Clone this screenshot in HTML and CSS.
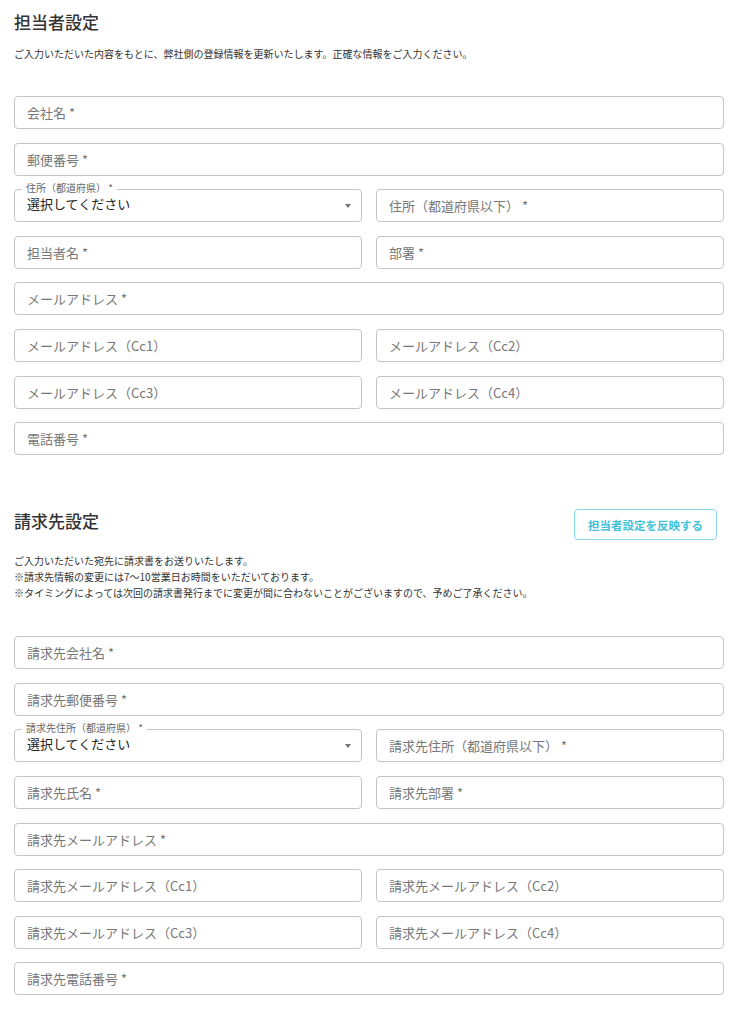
FILE: index.html
```html
<!DOCTYPE html>
<html lang="ja">
<head>
  <meta charset="UTF-8" />
  <meta name="viewport" content="width=device-width, initial-scale=1.0" />
  <title>担当者設定</title>
  <link rel="stylesheet" href="styles.css">
</head>
<body>
  <main class="page">
    <section class="section" id="contact-section">
      <div class="section-head">
        <h2 class="section-title">担当者設定</h2>
      </div>
      <p class="section-note">ご入力いただいた内容をもとに、弊社側の登録情報を更新いたします。正確な情報をご入力ください。</p>

      <form class="fields">
        <input class="field full" type="text" placeholder="会社名 *" />
        <input class="field full" type="text" placeholder="郵便番号 *" />
        <div class="select-field">
          <label class="select-label">住所（都道府県） *</label>
          <select class="select">
            <option>選択してください</option>
          </select>
        </div>
        <input class="field" type="text" placeholder="住所（都道府県以下） *" />
        <input class="field" type="text" placeholder="担当者名 *" />
        <input class="field" type="text" placeholder="部署 *" />
        <input class="field full" type="text" placeholder="メールアドレス *" />
        <input class="field" type="text" placeholder="メールアドレス（Cc1）" />
        <input class="field" type="text" placeholder="メールアドレス（Cc2）" />
        <input class="field" type="text" placeholder="メールアドレス（Cc3）" />
        <input class="field" type="text" placeholder="メールアドレス（Cc4）" />
        <input class="field full" type="text" placeholder="電話番号 *" />
      </form>
    </section>

    <section class="section section-billing" id="billing-section">
      <div class="section-head">
        <h2 class="section-title">請求先設定</h2>
        <button class="copy-btn" type="button">担当者設定を反映する</button>
      </div>
      <p class="section-note">
        ご入力いただいた宛先に請求書をお送りいたします。<br>
        ※請求先情報の変更には7〜10営業日お時間をいただいております。<br>
        ※タイミングによっては次回の請求書発行までに変更が間に合わないことがございますので、予めご了承ください。
      </p>

      <form class="fields">
        <input class="field full" type="text" placeholder="請求先会社名 *" />
        <input class="field full" type="text" placeholder="請求先郵便番号 *" />
        <div class="select-field">
          <label class="select-label">請求先住所（都道府県） *</label>
          <select class="select">
            <option>選択してください</option>
          </select>
        </div>
        <input class="field" type="text" placeholder="請求先住所（都道府県以下） *" />
        <input class="field" type="text" placeholder="請求先氏名 *" />
        <input class="field" type="text" placeholder="請求先部署 *" />
        <input class="field full" type="text" placeholder="請求先メールアドレス *" />
        <input class="field" type="text" placeholder="請求先メールアドレス（Cc1）" />
        <input class="field" type="text" placeholder="請求先メールアドレス（Cc2）" />
        <input class="field" type="text" placeholder="請求先メールアドレス（Cc3）" />
        <input class="field" type="text" placeholder="請求先メールアドレス（Cc4）" />
        <input class="field full" type="text" placeholder="請求先電話番号 *" />
      </form>
    </section>
  </main>
</body>
</html>
```

FILE: styles.css
```css
* {
  box-sizing: border-box;
  padding: 0;
  margin: 0;
}

body {
  font-family: "Noto Sans CJK JP", "Noto Sans", sans-serif;
  background: #fff;
  color: #333;
}

.page {
  width: 740px;
  padding: 10px 16px 0 14px;
}

.section-billing {
  margin-top: 54px;
}

.section-head {
  display: flex;
  justify-content: space-between;
  align-items: flex-start;
}

.section-title {
  font-size: 17px;
  line-height: 24px;
  font-weight: 500;
  color: #333;
}

.section-note {
  margin-top: 12px;
  font-size: 10px;
  line-height: 16px;
  color: #333;
}

.section-billing .section-note {
  margin-top: 13px;
}

.fields {
  margin-top: 34px;
  display: grid;
  grid-template-columns: 1fr 1fr;
  column-gap: 14px;
  row-gap: 13.6px;
}

.section-billing .fields {
  margin-top: 35px;
}

.full {
  grid-column: span 2;
}

.field {
  height: 33px;
  width: 100%;
  padding: 0 12px;
  font-family: inherit;
  font-size: 13px;
  color: #333;
  border: 1px solid #c4c4c4;
  border-radius: 4px;
  outline: none;
  background: #fff;
}

.field::placeholder {
  color: #777;
}

/* outlined select with the label sitting in the top border */
.select-field {
  position: relative;
  height: 33px;
}

.select {
  width: 100%;
  height: 100%;
  padding: 0 30px 4px 12px;
  font-family: inherit;
  font-size: 13px;
  color: #222;
  border: 1px solid #c4c4c4;
  border-radius: 4px;
  background: #fff;
  appearance: none;
  -webkit-appearance: none;
  outline: none;
}

.select-label {
  position: absolute;
  top: -7px;
  left: 8px;
  padding: 0 4px;
  background: #fff;
  font-size: 10px;
  line-height: 12px;
  color: #666;
}

.select-field::after {
  content: "";
  position: absolute;
  right: 11px;
  top: 15px;
  border-left: 3.5px solid transparent;
  border-right: 3.5px solid transparent;
  border-top: 4px solid #757575;
}

.copy-btn {
  width: 143px;
  height: 31px;
  margin-right: 7px;
  font-family: inherit;
  font-size: 11.5px;
  font-weight: 700;
  color: #45c1d7;
  background: #fff;
  border: 1px solid #86d9e8;
  border-radius: 4px;
  cursor: pointer;
}
```
